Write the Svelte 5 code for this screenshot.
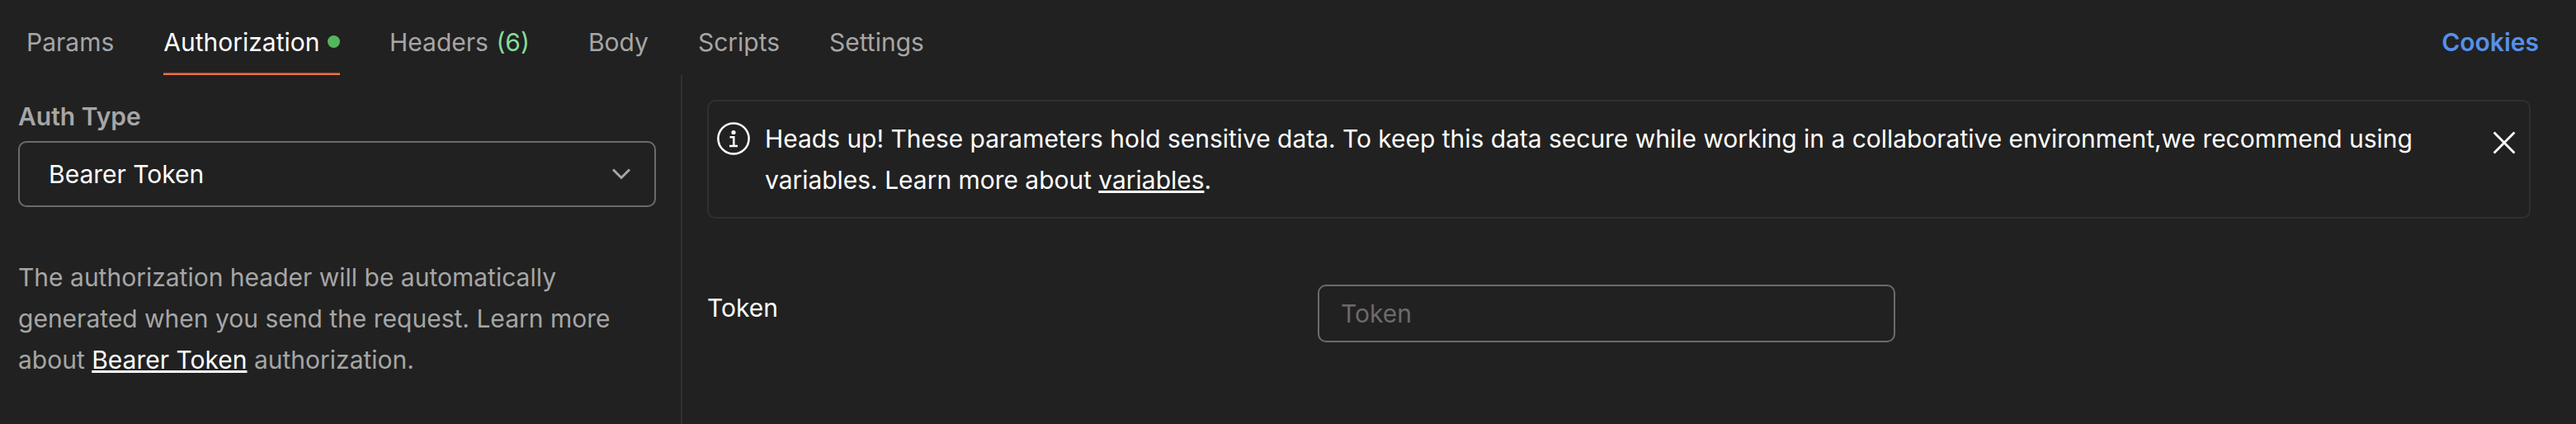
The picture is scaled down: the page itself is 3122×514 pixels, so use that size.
<script>
  const tabs = [
    { label: 'Params' },
    { label: 'Authorization', active: true },
    { label: 'Headers', count: '(6)' },
    { label: 'Body' },
    { label: 'Scripts' },
    { label: 'Settings' }
  ];
</script>

<div class="panel">
  <header class="topbar">
    <nav class="tabs">
      {#each tabs as tab}
        <button class="tab" class:active={tab.active}>
          <span>{tab.label}</span>
          {#if tab.active}<i class="dot"></i>{/if}
          {#if tab.count}<span class="count">{tab.count}</span>{/if}
        </button>
      {/each}
    </nav>
    <a class="cookies" href="#cookies">Cookies</a>
  </header>

  <div class="content">
    <aside class="sidebar">
      <div class="label">Auth Type</div>
      <div class="select">
        <span>Bearer Token</span>
        <svg width="24" height="16" viewBox="0 0 24 16" fill="none" stroke="#a6a6a6" stroke-width="3">
          <path d="M2 2.5 12 12.5 22 2.5" />
        </svg>
      </div>
      <p class="help">
        The authorization header will be automatically generated when you send the request. Learn more about <a href="#bearer">Bearer Token</a> authorization.
      </p>
    </aside>

    <main class="main">
      <div class="alert">
        <svg class="info" width="40" height="40" viewBox="0 0 40 40" fill="none" stroke="#fff" stroke-width="2.5">
          <circle cx="20" cy="20" r="18.6" />
          <path d="M15.5 18.2h4.8V29M15 29h10" />
          <circle cx="20" cy="12.5" r="2.6" fill="#fff" stroke="none" />
        </svg>
        <p>Heads up! These parameters hold sensitive data. To keep this data secure while working in a collaborative environment,we recommend using variables. Learn more about <a href="#variables">variables</a>.</p>
        <svg class="close" width="28" height="28" viewBox="0 0 28 28" fill="none" stroke="#fff" stroke-width="2.8">
          <path d="M1.6 1.6 26.4 26.4M26.4 1.6 1.6 26.4" />
        </svg>
      </div>
      <div class="field">
        <label for="token">Token</label>
        <input id="token" type="text" placeholder="Token" />
      </div>
    </main>
  </div>
</div>

<style>
  :global(body) { margin: 0; background: #212121; }
  .panel {
    height: 514px;
    display: flex;
    flex-direction: column;
    background: #212121;
    color: #fff;
    font: 400 30px/50px Inter, sans-serif;
    overflow: hidden;
  }
  a { color: inherit; }
  .topbar {
    height: 91px;
    flex: none;
    display: flex;
    justify-content: space-between;
    padding: 0 45px 0 32px;
  }
  .tabs { display: flex; gap: 60px; }
  .tab {
    box-sizing: border-box;
    height: 91px;
    display: flex;
    align-items: flex-start;
    padding: 26px 0 0;
    border: 0;
    border-bottom: 2px solid transparent;
    background: none;
    color: #a6a6a6;
    font: inherit;
  }
  .tab.active {
    color: #fff;
    border-color: #ee7242;
    box-shadow: inset 0 -1px #8a4a32;
  }
  .dot {
    width: 15px;
    height: 15px;
    margin: 17px 0 0 9.5px;
    border-radius: 50%;
    background: #55b75d;
  }
  .count { margin: 0 11px 0 9.5px; color: #85dc9b; }
  .cookies {
    padding-top: 26px;
    color: #5690ea;
    font-weight: 600;
    text-decoration: none;
  }
  .content { flex: 1; display: flex; }
  .sidebar {
    box-sizing: border-box;
    width: 827px;
    flex: none;
    padding: 25px 30px 0 22px;
    border-right: 2px solid #303030;
  }
  .label { color: #a6a6a6; font-weight: 600; }
  .select {
    box-sizing: border-box;
    height: 80px;
    display: flex;
    align-items: center;
    justify-content: space-between;
    margin-top: 5px;
    padding: 0 28px 0 35px;
    border: 2px solid #6b6b6b;
    border-radius: 10px;
  }
  .help { width: 740px; margin: 60px 0 0; color: #a6a6a6; }
  .help a, .alert a {
    color: #fff;
    text-decoration-thickness: 3px;
    text-underline-offset: 2px;
    text-decoration-skip-ink: none;
  }
  .main { flex: 1; padding: 30px 55px 0 30px; }
  .alert {
    box-sizing: border-box;
    height: 144px;
    display: flex;
    align-items: flex-start;
    padding: 20px 16px 0 10px;
    border: 2px solid #303030;
    border-radius: 10px;
  }
  .info { flex: none; margin-top: 5px; }
  .alert p {
    width: 2040px;
    margin: 0 auto 0 18px;
    letter-spacing: -0.03px;
  }
  .close { margin-top: 16px; }
  .field { display: flex; align-items: flex-start; margin-top: 80px; }
  label { width: 740px; margin-top: 3px; }
  input {
    box-sizing: border-box;
    width: 700px;
    height: 70px;
    padding: 0 26px;
    border: 2px solid #6b6b6b;
    border-radius: 10px;
    background: transparent;
    color: #fff;
    font: inherit;
  }
  input::placeholder { color: #6b6b6b; opacity: 1; }
</style>
